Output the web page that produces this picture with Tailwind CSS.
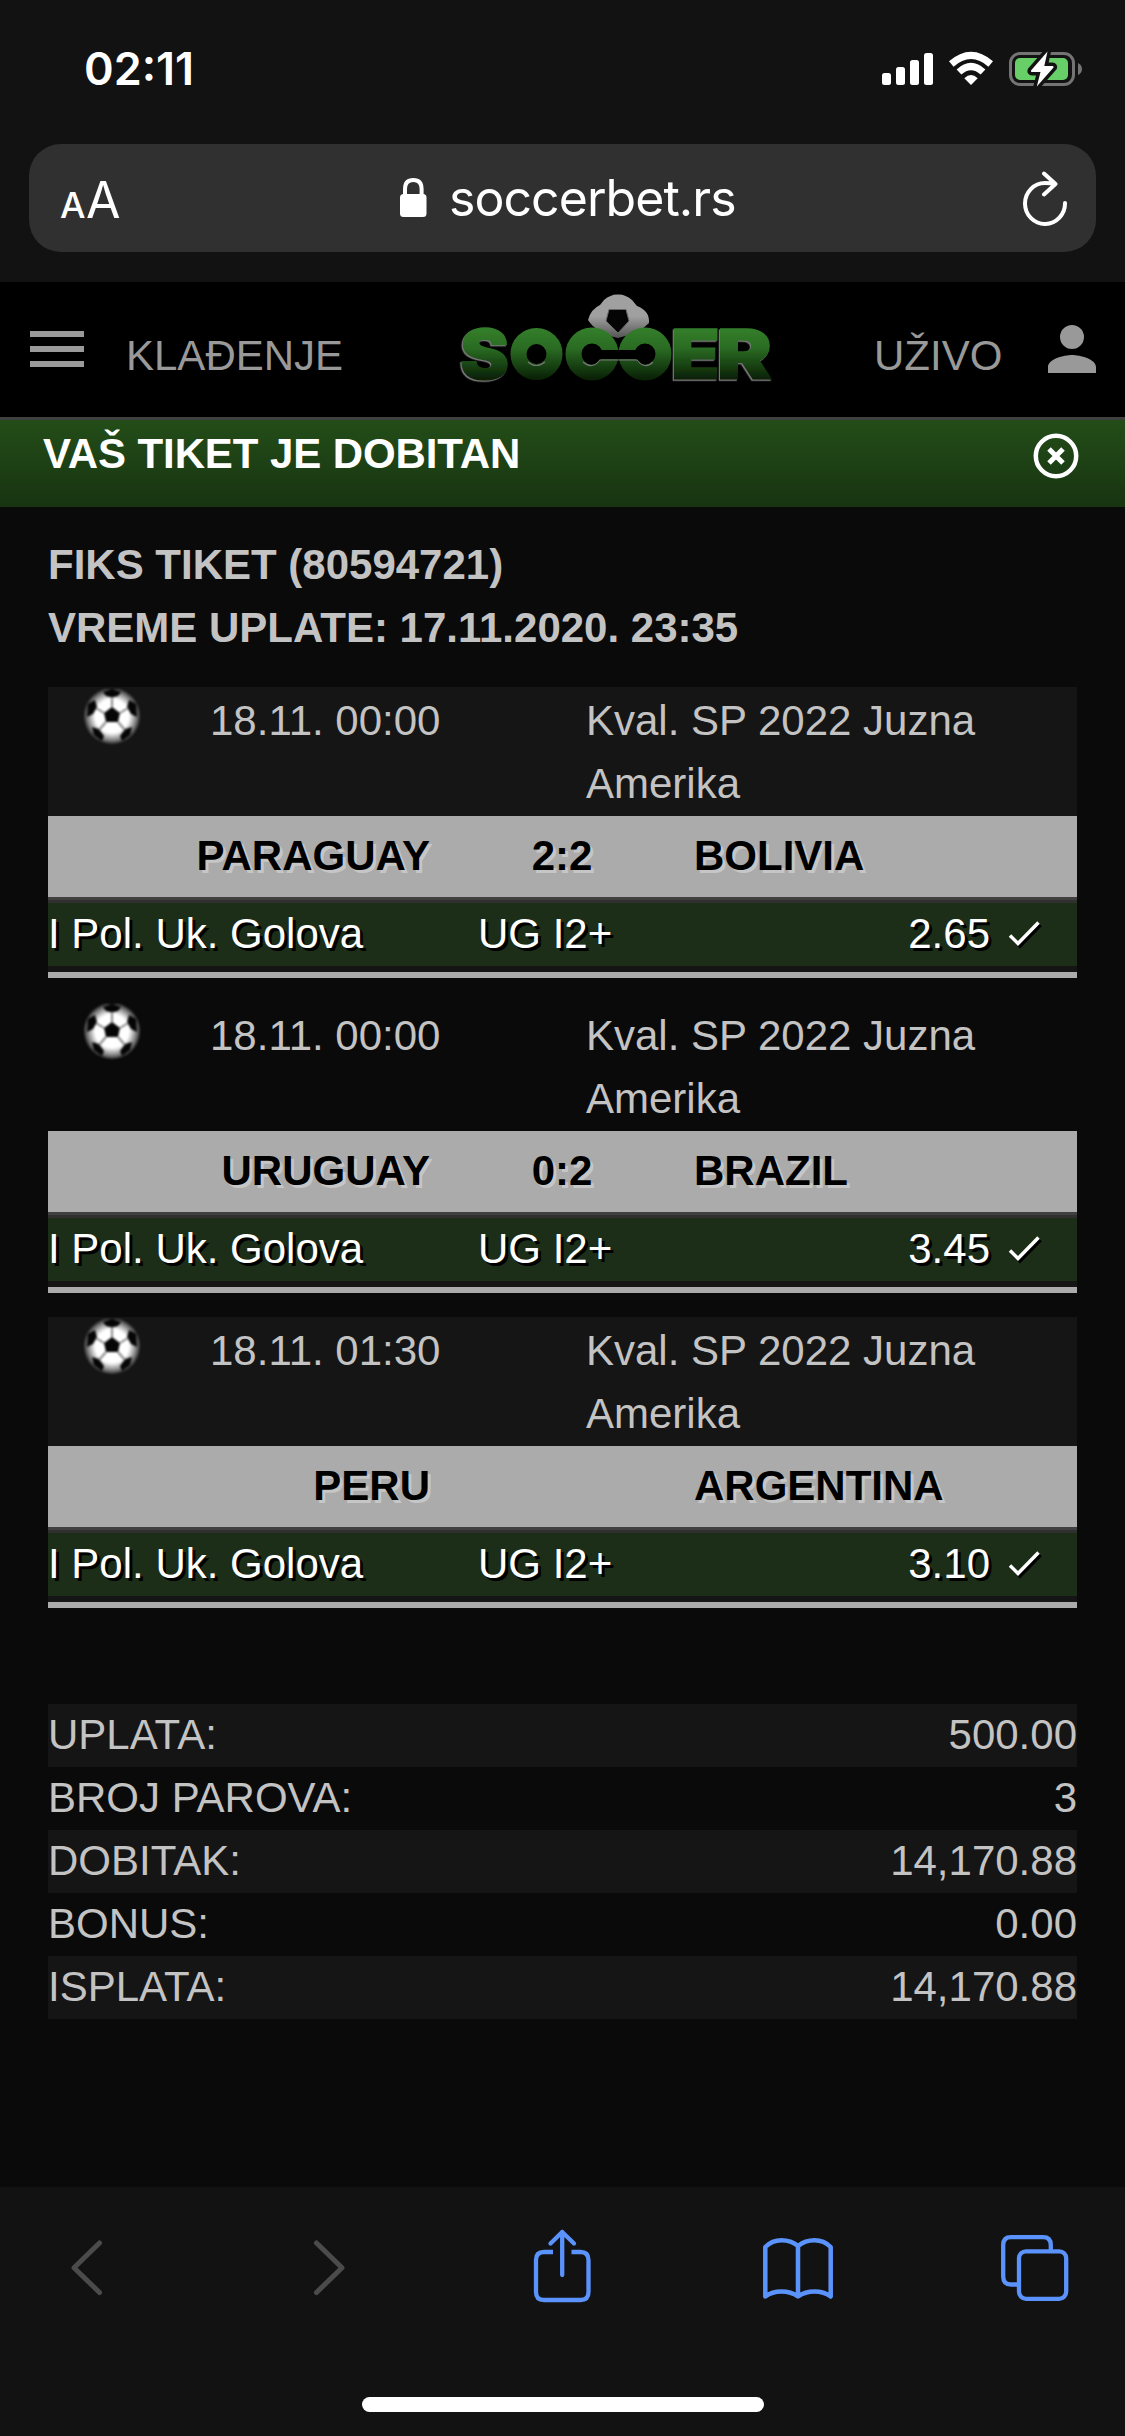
<!DOCTYPE html>
<html lang="sr">
<head>
<meta charset="utf-8">
<title>soccerbet.rs</title>
<script src="https://cdn.jsdelivr.net/npm/@tailwindcss/browser@4"></script>
</head>
<body class="bg-[#0a0a0a]">
<div class="w-[1125px] h-[2436px] flex flex-col overflow-hidden font-['Liberation_Sans',Arial,sans-serif] text-[42px] leading-[63px] text-[#c3c3c3]">

  <!-- Browser chrome: status bar and address bar -->
  <div class="h-[282px] shrink-0 bg-[#121212] px-[29px] text-white font-['Inter',sans-serif]">
    <div class="h-[144px] flex items-center justify-between pl-[55px] pr-[12px]">
      <span class="text-[45px] leading-[46px] font-semibold mt-[-6px]">02:11</span>
      <svg class="w-[204px] h-[40px] mt-[-6px]" viewBox="880 49 204 40">
        <g fill="#fff">
          <rect x="882" y="73" width="9" height="12" rx="2.5"/><rect x="896" y="67" width="9" height="18" rx="2.5"/><rect x="910" y="60" width="9" height="25" rx="2.5"/><rect x="924" y="53" width="9" height="32" rx="2.5"/>
          <path d="M971 85L964.3 78.3Q971 71.700 977.7 78.300Z"/>
        </g>
        <path d="M951.300 64Q971 46.800 990.700 64M959 72Q971 61 983 72" fill="none" stroke="#fff" stroke-width="7"/>
        <rect x="1010.500" y="53.500" width="63" height="31" rx="9.500" fill="none" stroke="#747474" stroke-width="3"/>
        <path d="M1078 63Q1082 65 1082 69T1078 75Z" fill="#747474"/>
        <rect x="1015" y="58" width="53" height="22" rx="5" fill="#68ce67"/>
        <path d="M1047.500 51.500L1031 70.500Q1030.500 72 1032 72H1040.500L1036.800 86.500L1053.500 67.500Q1054 66 1052.500 66H1044.300Z" fill="#fff" stroke="#121212" stroke-width="7" paint-order="stroke" stroke-linejoin="round"/>
      </svg>
    </div>
    <div class="h-[108px] rounded-[32px] bg-[#303030] flex items-center pl-[31px] pr-[27px]">
      <div class="flex items-baseline gap-[3px] w-[60px] mt-[8px]">
        <span class="text-[36px] leading-[50px] font-medium w-[23px]">A</span>
        <span class="text-[50px] leading-[50px] w-[33px] tracking-[-1px]">A</span>
      </div>
      <svg class="w-[27px] h-[40px] ml-[280px]" viewBox="400 178 27 40">
        <path d="M405 196V189Q405 180 413.300 180T421.600 189V196" fill="none" stroke="#fff" stroke-width="4"/>
        <rect x="400" y="194" width="26.500" height="23" rx="3.500" fill="#fff"/>
      </svg>
      <span class="ml-[22px] text-[50px] leading-[60px] tracking-[-0.95px]">soccerbet.rs</span>
      <svg class="ml-auto w-[48px] h-[56px]" viewBox="1021 170 48 56" fill="none" stroke="#fff" stroke-width="4" stroke-linecap="round" stroke-linejoin="round">
        <path d="M1065 203A20 20.500 0 1 1 1045 183Q1050 183 1055 184M1044 173.500L1055.500 184L1044 194.500"/>
      </svg>
    </div>
  </div>

  <!-- Site header -->
  <header class="h-[138px] shrink-0 bg-black border-b-[3px] border-[#404040] flex items-center text-[#999] pl-[30px] pr-[29px]">
    <div class="w-[54px] flex flex-col gap-[9px] mt-[-2px]">
      <i class="block h-[6px] bg-[#9a9a9a]"></i><i class="block h-[6px] bg-[#9a9a9a]"></i><i class="block h-[6px] bg-[#9a9a9a]"></i>
    </div>
    <span class="ml-[42px] w-[230px] mt-[11px]">KLAĐENJE</span>
    <svg class="ml-[92px] w-[336px] h-[134px]" viewBox="448 283 336 134">
      <defs>
        <linearGradient id="green" gradientUnits="userSpaceOnUse" x1="0" y1="327" x2="0" y2="381"><stop offset="0" stop-color="#34802b"/><stop offset=".4" stop-color="#2a6b23"/><stop offset=".95" stop-color="#0a2206"/></linearGradient>
        <linearGradient id="silver" x1="0" y1="0" x2="0" y2="1"><stop offset="0" stop-color="#a0a0a0"/><stop offset=".5" stop-color="#a0a0a0"/><stop offset="1" stop-color="#555"/></linearGradient>
        <filter id="edge" x="-10%" y="-10%" width="120%" height="120%"><feDropShadow dx="-1.200" dy="1.200" stdDeviation="0.400" flood-color="#777"/></filter>
      </defs>
      <path d="M604 300Q611 294 618 294.500Q625 294 632 300L637 306Q650 311 649 323Q640 333 618 338Q596 333 588 320Q591 309 600 305Z" fill="url(#silver)"/>
      <path d="M609 309.500H626L629 321L618 333L606 321Z" fill="#050505" stroke="#666" stroke-width="1"/>
      <g fill="url(#green)" font-family="Inter" font-weight="900" font-size="69" stroke="url(#green)" stroke-width="1.500" filter="url(#edge)">
        <text x="460" y="379" textLength="49" lengthAdjust="spacingAndGlyphs">S</text><text x="671" y="379" textLength="49" lengthAdjust="spacingAndGlyphs">E</text><text x="717" y="379" textLength="55" lengthAdjust="spacingAndGlyphs">R</text>
      </g>
      <g fill="none" stroke="url(#green)" stroke-width="16">
        <circle cx="536.500" cy="354" r="18"/><circle cx="592" cy="354" r="18.500"/><circle cx="645" cy="354" r="18.500"/>
      </g>
      <rect x="596" y="350" width="45" height="9" fill="#000"/>
      <path d="M528 362Q536 369 545 362M583 362Q592 370 600 360H637Q645 370 653 362" fill="none" stroke="#777" stroke-width="1.200"/>
    </svg>
    <span class="ml-[90px] w-[130px] mt-[11px]">UŽIVO</span>
    <svg class="ml-auto w-[48px] h-[48px] mt-[-1px]" viewBox="4 4 16 16" fill="#999"><path d="M12 12a4 4 0 1 0 0-8 4 4 0 0 0 0 8m0 2c-2.670 0-8 1.340-8 4v2h16v-2c0-2.660-5.330-4-8-4"/></svg>
  </header>

  <!-- Ticket result -->
  <div class="h-[87px] shrink-0 bg-linear-to-b from-[#234d18] to-[#183411] flex items-start justify-between pl-[43px] pr-[46px] text-white font-bold">
    <span class="mt-[2px] tracking-[-0.1px]">VAŠ TIKET JE DOBITAN</span>
    <svg class="w-[46px] h-[46px] mt-[13px]" viewBox="-23 -23 46 46" fill="none" stroke="#fff"><circle r="20.200" stroke-width="4.500"/><path d="M-7-7L7 7M7-7L-7 7" stroke-width="5"/></svg>
  </div>

  <main class="px-12 pt-[26px] flex flex-col grow">
    <div class="font-bold"><p>FIKS TIKET (80594721)</p><p>VREME UPLATE: 17.11.2020. 23:35</p></div>

    <div id="matches" class="mt-[28px] flex flex-col gap-6"></div>

    <div class="mt-24" id="totals"></div>
  </main>

  <!-- Browser toolbar -->
  <footer class="h-[249px] shrink-0 bg-[#121212] flex flex-col items-center justify-between pb-6">
    <div class="w-full flex items-center pl-[69px] pt-[40px]">
      <svg class="w-[36px] h-[80px]" viewBox="69 2227 36 80" fill="none" stroke="#4b4b4b" stroke-width="5" stroke-linecap="round" stroke-linejoin="round"><path d="M99.500 2243L74 2267.700L99.500 2292.500"/></svg>
      <svg class="w-[36px] h-[80px] ml-[206px]" viewBox="311 2227 36 80" fill="none" stroke="#4b4b4b" stroke-width="5" stroke-linecap="round" stroke-linejoin="round"><path d="M316.500 2243L342 2267.700L316.500 2292.500"/></svg>
      <svg class="w-[60px] h-[80px] ml-[185px]" viewBox="532 2227 60 80" fill="none" stroke="#5b93fc" stroke-width="4.300"><path d="M553 2252H544Q536 2252 536 2260V2292Q536 2300 544 2300H580.500Q588.500 2300 588.500 2292V2260Q588.500 2252 580.500 2252H571.500"/><path d="M562.200 2275V2232M550.500 2243.500L562.200 2232L574 2243.500" stroke-linecap="round" stroke-linejoin="round"/></svg>
      <svg class="w-[72px] h-[80px] ml-[170px]" viewBox="762 2227 72 80" fill="none" stroke="#5b93fc" stroke-width="4.500" stroke-linecap="round" stroke-linejoin="round"><path d="M798 2246Q791 2240.300 781.500 2240.300T765.300 2247V2296.500Q772 2291.500 781.500 2291.500T798 2296.500Q805 2291.500 814.500 2291.500T830.700 2296.500V2247Q824 2240.300 814.500 2240.300T798 2246V2296"/></svg>
      <svg class="w-[70px] h-[80px] ml-[166px]" viewBox="1000 2227 70 80" fill="none" stroke="#5b93fc" stroke-width="4.300"><rect x="1019" y="2251.300" width="47.200" height="47.500" rx="7"/><path d="M1050.800 2251V2245Q1050.800 2237.200 1043 2237.200H1011Q1003.200 2237.200 1003.200 2245V2276.500Q1003.200 2284.500 1011 2284.500H1019"/></svg>
    </div>
    <div class="w-[402px] h-[15px] rounded-full bg-white"></div>
  </footer>
</div>

<script>
  const ball = `<svg class="w-[60px] h-[57px] ml-[34px] blur-[0.8px]" viewBox="-30 -27 60 57">
    <defs><radialGradient id="leather"><stop offset="0" stop-color="#fff"/><stop offset=".6" stop-color="#fff"/><stop offset=".85" stop-color="#888"/><stop offset="1" stop-color="#333"/></radialGradient></defs>
    <circle r="28" fill="url(#leather)"/>
    <g fill="#050505"><path d="M0-9L8-3L6 6H-6L-8-3Z"/><path d="M-9-24L0-27L9-24L6-20L0-18.500L-6-20Z"/>
    <path d="M-24-12L-17-16L-15-9L-19-2L-25 1Z"/><path d="M24-12L17-16L15-9L19-2L25 1Z"/>
    <path d="M-20 11L-13 13L-8 20L-10 25L-18 19Z"/><path d="M20 11L13 13L8 20L10 25L18 19Z"/></g>
    <path d="M0-18V-9M-16-8L-8-3M16-8L8-3M-13 14L-6 6M13 14L6 6" stroke="#888" stroke-width="2"/></svg>`;

  const matches = [
    ['18.11. 00:00', 'PARAGUAY', '2:2', 'BOLIVIA', '2.65', 'bg-[#151515]'],
    ['18.11. 00:00', 'URUGUAY', '0:2', 'BRAZIL', '3.45', ''],
    ['18.11. 01:30', 'PERU', '', 'ARGENTINA', '3.10', 'bg-[#151515]'],
  ];
  document.getElementById('matches').innerHTML = matches.map(([time, home, score, away, odds, shade]) => `
    <section>
      <div class="h-[129px] pt-[2px] grid grid-cols-[162px_376px_1fr] items-start ${shade}">
        ${ball}<span>${time}</span><span>Kval. SP 2022 Juzna Amerika</span>
      </div>
      <div class="h-[81px] pt-[8px] bg-[#ababab] text-black font-bold grid grid-cols-[382px_264px_1fr] [text-shadow:3px_3px_0_#c6c6c6]">
        <span class="text-right">${home}</span><span class="text-center">${score}</span><span>${away}</span>
      </div>
      <div class="h-[3px] bg-[#404040]"></div>
      <div class="h-[3px] bg-[#303030]"></div>
      <div class="h-[63px] bg-[#1c2d18] text-white flex items-center [text-shadow:3px_3px_0_#000]">
        <span class="w-[430px] mt-[-2px]">I Pol. Uk. Golova</span><span class="mt-[-2px]">UG I2+</span><span class="ml-auto mt-[-2px]">${odds}</span>
        <svg class="w-[34px] h-[28px] ml-[18px] mr-[35px] overflow-visible" viewBox="0 0 34 28" fill="none" stroke-width="3.500"><path d="M4 17L12 25L32.500 4" stroke="#000"/><path d="M2 14.500L10 22.500L30.500 1.500" stroke="#fff"/></svg>
      </div>
      <div class="h-[6px] bg-[#151515]"></div>
      <div class="h-[6px] bg-[#ababab]"></div>
    </section>`).join('');

  const totals = [['UPLATA:', '500.00'], ['BROJ PAROVA:', '3'], ['DOBITAK:', '14,170.88'], ['BONUS:', '0.00'], ['ISPLATA:', '14,170.88']];
  document.getElementById('totals').innerHTML = totals.map(([label, value]) =>
    `<div class="h-[63px] flex justify-between odd:bg-[#151515] leading-[61px]"><span>${label}</span><span>${value}</span></div>`).join('');
</script>
</body>
</html>
